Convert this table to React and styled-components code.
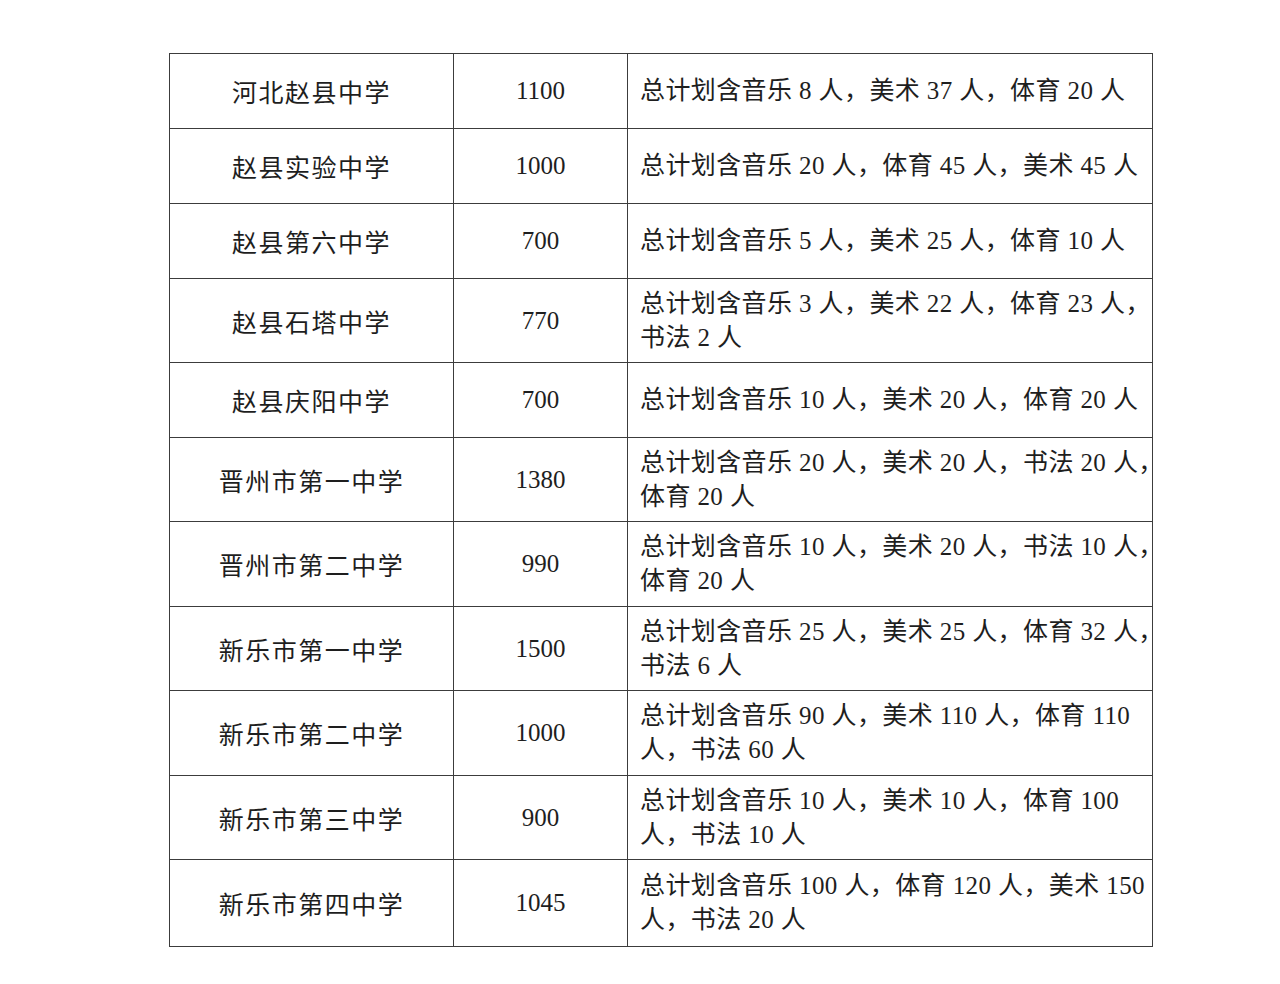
import React from 'react';
import styled, { createGlobalStyle } from 'styled-components';

const rows = [
  { name: '河北赵县中学', count: '1100', h: 75, note: ['总计划含音乐 8 人，美术 37 人，体育 20 人'] },
  { name: '赵县实验中学', count: '1000', h: 75, note: ['总计划含音乐 20 人，体育 45 人，美术 45 人'] },
  { name: '赵县第六中学', count: '700', h: 75, note: ['总计划含音乐 5 人，美术 25 人，体育 10 人'] },
  { name: '赵县石塔中学', count: '770', h: 84, note: ['总计划含音乐 3 人，美术 22 人，体育 23 人，', '书法 2 人'] },
  { name: '赵县庆阳中学', count: '700', h: 75, note: ['总计划含音乐 10 人，美术 20 人，体育 20 人'] },
  { name: '晋州市第一中学', count: '1380', h: 84, note: ['总计划含音乐 20 人，美术 20 人，书法 20 人，', '体育 20 人'] },
  { name: '晋州市第二中学', count: '990', h: 85, note: ['总计划含音乐 10 人，美术 20 人，书法 10 人，', '体育 20 人'] },
  { name: '新乐市第一中学', count: '1500', h: 84, note: ['总计划含音乐 25 人，美术 25 人，体育 32 人，', '书法 6 人'] },
  { name: '新乐市第二中学', count: '1000', h: 85, note: ['总计划含音乐 90 人，美术 110 人，体育 110', '人，书法 60 人'] },
  { name: '新乐市第三中学', count: '900', h: 84, note: ['总计划含音乐 10 人，美术 10 人，体育 100', '人，书法 10 人'] },
  { name: '新乐市第四中学', count: '1045', h: 87, note: ['总计划含音乐 100 人，体育 120 人，美术 150', '人，书法 20 人'] },
];

const GlobalStyle = createGlobalStyle`
  body {
    margin: 0;
    background: #ffffff;
    font-family: "Liberation Serif", "Noto Sans CJK SC", serif;
    color: #1e1e1e;
  }
`;

const Page = styled.div`
  padding: 53px 0 0 169px;
`;

const Table = styled.table`
  border-collapse: collapse;
  width: 983px;
  table-layout: fixed;
`;

const Row = styled.tr`
  height: ${(p) => p.$h}px;
`;

const Cell = styled.td`
  border: 1px solid #3c3c3c;
  padding: 0;
  font-size: 25px;
  vertical-align: middle;
  text-align: ${(p) => (p.$left ? 'left' : 'center')};
  padding-left: ${(p) => (p.$left ? '12px' : '0')};
  letter-spacing: ${(p) => (p.$spaced ? '1.5px' : p.$left ? '0.4px' : '0')};
`;

const Line = styled.div`
  line-height: 34px;
  white-space: nowrap;
`;

export default function App() {
  return (
    <Page>
      <GlobalStyle />
      <Table>
        <colgroup>
          <col style={{ width: 284 }} />
          <col style={{ width: 174 }} />
          <col style={{ width: 525 }} />
        </colgroup>
        <tbody>
          {rows.map((r) => (
            <Row key={r.name} $h={r.h}>
              <Cell $spaced>{r.name}</Cell>
              <Cell>{r.count}</Cell>
              <Cell $left>
                {r.note.map((l) => (
                  <Line key={l}>{l}</Line>
                ))}
              </Cell>
            </Row>
          ))}
        </tbody>
      </Table>
    </Page>
  );
}
